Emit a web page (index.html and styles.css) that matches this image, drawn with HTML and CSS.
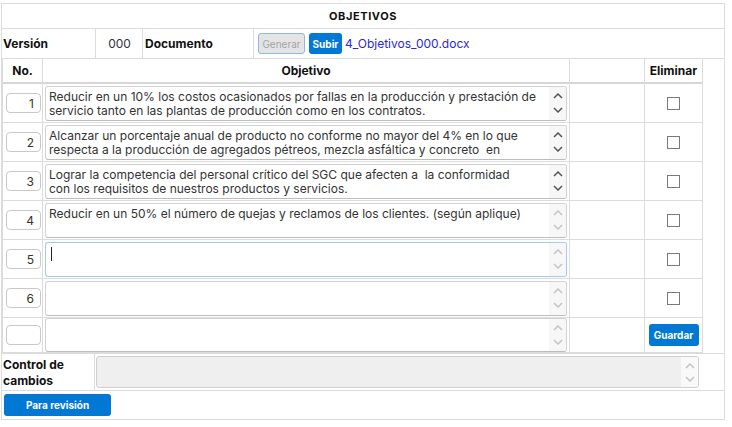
FILE: index.html
```html
<!DOCTYPE html>
<html lang="es">
<head>
<meta charset="utf-8">
<title>Objetivos</title>
<link rel="stylesheet" href="styles.css">
</head>
<body>
<div class="frame">
  <div class="title">OBJETIVOS</div>

  <div class="meta">
    <div class="mcell label">Versión</div>
    <div class="mcell center">000</div>
    <div class="mcell label">Documento</div>
    <div class="mcell actions">
      <button class="btn btn-disabled" disabled>Generar</button>
      <button class="btn btn-blue btn-sm">Subir</button>
      <a class="doclink" href="#">4_Objetivos_000.docx</a>
    </div>
  </div>

  <div class="objs">
    <div class="grid">
      <div class="hcell">No.</div>
      <div class="hcell">Objetivo</div>
      <div class="hcell"></div>
      <div class="hcell">Eliminar</div>

      <div class="cell c-num"><input class="num" value="1"></div>
      <div class="cell c-obj"><div class="ta"><textarea>Reducir en un 10% los costos ocasionados por fallas en la producción y prestación de
servicio tanto en las plantas de producción como en los contratos.
</textarea><div class="sb dark"><svg viewBox="0 0 10 6"><path d="M1 5L5 1L9 5"/></svg><svg viewBox="0 0 10 6"><path d="M1 1L5 5L9 1"/></svg></div></div></div>
      <div class="cell"></div>
      <div class="cell c-chk"><input type="checkbox" class="chk"></div>

      <div class="cell c-num"><input class="num" value="2"></div>
      <div class="cell c-obj"><div class="ta"><textarea>Alcanzar un porcentaje anual de producto no conforme no mayor del 4% en lo que
respecta a la producción de agregados pétreos, mezcla asfáltica y concreto  en
proyectos y obras.</textarea><div class="sb dark"><svg viewBox="0 0 10 6"><path d="M1 5L5 1L9 5"/></svg><svg viewBox="0 0 10 6"><path d="M1 1L5 5L9 1"/></svg></div></div></div>
      <div class="cell"></div>
      <div class="cell c-chk"><input type="checkbox" class="chk"></div>

      <div class="cell c-num"><input class="num" value="3"></div>
      <div class="cell c-obj"><div class="ta"><textarea>Lograr la competencia del personal crítico del SGC que afecten a  la conformidad
con los requisitos de nuestros productos y servicios.
</textarea><div class="sb dark"><svg viewBox="0 0 10 6"><path d="M1 5L5 1L9 5"/></svg><svg viewBox="0 0 10 6"><path d="M1 1L5 5L9 1"/></svg></div></div></div>
      <div class="cell"></div>
      <div class="cell c-chk"><input type="checkbox" class="chk"></div>

      <div class="cell c-num"><input class="num" value="4"></div>
      <div class="cell c-obj"><div class="ta"><textarea>Reducir en un 50% el número de quejas y reclamos de los clientes. (según aplique)</textarea><div class="sb"><svg viewBox="0 0 10 6"><path d="M1 5L5 1L9 5"/></svg><svg viewBox="0 0 10 6"><path d="M1 1L5 5L9 1"/></svg></div></div></div>
      <div class="cell"></div>
      <div class="cell c-chk"><input type="checkbox" class="chk"></div>

      <div class="cell c-num"><input class="num" value="5"></div>
      <div class="cell c-obj"><div class="ta focus"><textarea></textarea><span class="caret"></span><div class="sb"><svg viewBox="0 0 10 6"><path d="M1 5L5 1L9 5"/></svg><svg viewBox="0 0 10 6"><path d="M1 1L5 5L9 1"/></svg></div></div></div>
      <div class="cell"></div>
      <div class="cell c-chk"><input type="checkbox" class="chk"></div>

      <div class="cell c-num"><input class="num" value="6"></div>
      <div class="cell c-obj"><div class="ta"><textarea></textarea><div class="sb"><svg viewBox="0 0 10 6"><path d="M1 5L5 1L9 5"/></svg><svg viewBox="0 0 10 6"><path d="M1 1L5 5L9 1"/></svg></div></div></div>
      <div class="cell"></div>
      <div class="cell c-chk"><input type="checkbox" class="chk"></div>

      <div class="cell c-num"><input class="num" value=""></div>
      <div class="cell c-obj"><div class="ta short"><textarea></textarea><div class="sb"><svg viewBox="0 0 10 6"><path d="M1 5L5 1L9 5"/></svg><svg viewBox="0 0 10 6"><path d="M1 1L5 5L9 1"/></svg></div></div></div>
      <div class="cell"></div>
      <div class="cell c-chk"><button class="btn btn-blue btn-save">Guardar</button></div>
    </div>
    <div class="objs-rest"></div>
  </div>

  <div class="control">
    <div class="ccell label">Control de<br>cambios</div>
    <div class="ccell c-ctrl"><div class="ta disabled"><textarea disabled></textarea><div class="sb"><svg viewBox="0 0 10 6"><path d="M1 5L5 1L9 5"/></svg><svg viewBox="0 0 10 6"><path d="M1 1L5 5L9 1"/></svg></div></div></div>
  </div>

  <div class="footer">
    <button class="btn btn-blue btn-review">Para revisión</button>
  </div>
</div>
</body>
</html>
```
FILE: styles.css
```css
* { box-sizing: border-box; }

body {
  margin: 3px 0 0 1px;
  font-family: Inter, "Liberation Sans", sans-serif;
  font-size: 12px;
  color: #222;
  background: #fff;
}

.frame {
  width: 724px;
  border: 1px solid #dcdcdc;
}

.title {
  height: 25px;
  border-bottom: 1px solid #dcdcdc;
  display: flex;
  align-items: center;
  justify-content: center;
  font-weight: 700;
  font-size: 11px;
  letter-spacing: 0.6px;
  color: #111;
}

.meta {
  display: grid;
  grid-template-columns: 94px 47px 111px 1fr;
  height: 30px;
  border-bottom: 1px solid #dcdcdc;
}

.mcell {
  display: flex;
  align-items: center;
  border-right: 1px solid #dcdcdc;
  padding-left: 1px;
}

.mcell:last-child { border-right: none; }

.label {
  font-weight: 700;
  color: #111;
}

.center {
  justify-content: center;
  color: #333;
}

.meta .label + .center + .label { padding-left: 2px; }

.actions {
  padding-left: 4px;
  gap: 4px;
}

.btn {
  font-family: Inter, "Liberation Sans", sans-serif;
  font-size: 10px;
  border-radius: 3px;
  cursor: pointer;
}

.btn-disabled {
  width: 47px;
  height: 21px;
  background: #e4e4e4;
  border: 1px solid #8fb8e2;
  color: #a4a4a4;
  padding: 0;
}

.btn-blue {
  background: #0078d4;
  border: none;
  color: #fff;
  font-weight: 700;
}

.btn-sm {
  width: 33px;
  height: 21px;
  padding: 0;
}

.doclink {
  color: #2828e0;
  text-decoration: none;
  font-size: 12px;
  margin-left: -1px;
}

.objs {
  display: flex;
  border-bottom: 1px solid #dcdcdc;
}

.grid {
  display: grid;
  grid-template-columns: 40px 527px 75px 58px;
  grid-template-rows: 25px repeat(6, 39px) 35px;
  border-left: 1px solid #dcdcdc;
  width: 701px;
}

.objs-rest { flex: 1; }

.hcell {
  border-right: 1px solid #dcdcdc;
  border-bottom: 2px solid #d6d6d6;
  display: flex;
  align-items: center;
  justify-content: center;
  font-weight: 700;
  color: #111;
}

.cell {
  border-right: 1px solid #dcdcdc;
  border-bottom: 1px solid #dcdcdc;
  display: flex;
  align-items: center;
}

.c-num { padding-left: 3px; }

.c-obj { padding: 0 2px; }

.c-chk { justify-content: center; }

.num {
  width: 35px;
  height: 20px;
  border: 1px solid #c9c9c9;
  border-radius: 4px;
  text-align: right;
  padding: 0 6px 0 0;
  font-family: Inter, "Liberation Sans", sans-serif;
  font-size: 12px;
  color: #333;
  background: #fff;
  outline: none;
}

.chk {
  appearance: none;
  -webkit-appearance: none;
  width: 13px;
  height: 13px;
  margin: 0;
  border: 1px solid #7a7a7a;
  background: #fff;
}

.ta {
  position: relative;
  display: flex;
  width: 100%;
  height: 35px;
  border: 1px solid #d2d2d2;
  border-bottom-color: #bdbdbd;
  border-radius: 3px;
  background: #fff;
  overflow: hidden;
}

.ta.short { height: 34px; }

.ta.focus {
  border-color: #a9c8ea;
  box-shadow: 0 0 1px #c7dcf2;
}

.ta textarea {
  flex: 1;
  border: none;
  outline: none;
  resize: none;
  overflow: hidden;
  background: transparent;
  padding: 3px 4px 0 3px;
  font-family: Inter, "Liberation Sans", sans-serif;
  font-size: 12px;
  line-height: 14px;
  color: #333;
  white-space: pre-wrap;
}

.caret {
  position: absolute;
  left: 5px;
  top: 4px;
  width: 1px;
  height: 14px;
  background: #222;
}

.sb {
  width: 17px;
  display: flex;
  flex-direction: column;
  justify-content: space-around;
  align-items: center;
  background: #f7f7f7;
  padding: 2px 0;
}

.sb svg {
  width: 10px;
  height: 6px;
  fill: none;
  stroke: #c4c4c4;
  stroke-width: 1.5;
}

.sb.dark svg { stroke: #555; }

.btn-save {
  width: 50px;
  height: 22px;
  padding: 0;
}

.control {
  display: grid;
  grid-template-columns: 93px 1fr;
  height: 37px;
  border-bottom: 1px solid #dcdcdc;
}

.ccell {
  border-right: 1px solid #dcdcdc;
  display: flex;
  align-items: center;
}

.ccell.label {
  display: block;
  padding: 3px 0 0 1px;
  line-height: 16px;
}

.c-ctrl {
  border-right: none;
  padding: 0 25px 0 1px;
}

.ta.disabled {
  height: 32px;
  background: #efefef;
  border-color: #d0d0d0;
}

.ta.disabled .sb { background: #f9f9f9; }

.footer {
  height: 28px;
  padding: 3px 0 0 2px;
}

.btn-review {
  width: 107px;
  height: 22px;
  padding: 0;
}
```
